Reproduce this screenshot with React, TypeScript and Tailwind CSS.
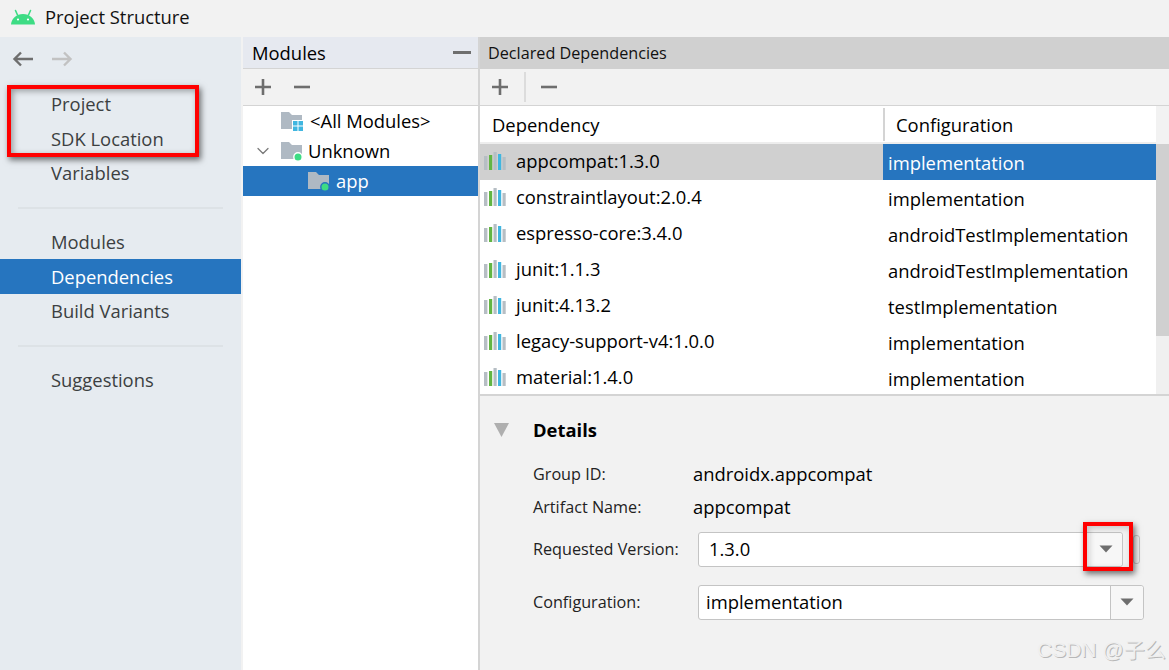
import React from 'react';
import { ChevronDown } from 'lucide-react';

const FONT = "font-['Open_Sans','Noto_Sans_CJK_SC',sans-serif]";

const AndroidLogo = () => (
  <svg width="24" height="16" viewBox="0 0 24 16" className="shrink-0">
    <path d="M0 15.5C0.5 9.5 5.5 5 12 5S23.5 9.5 24 15.5Z" fill="#3ddc84" />
    <path d="M6.5 6 4.5 1.5M17.5 6l2-4.5" stroke="#3ddc84" strokeWidth="1.6" strokeLinecap="round" />
    <circle cx="7" cy="10.5" r="1.1" fill="#fff" />
    <circle cx="17" cy="10.5" r="1.1" fill="#fff" />
  </svg>
);

const NavArrow = ({ right, color }: { right?: boolean; color: string }) => (
  <svg width="21" height="16" viewBox="0 0 21 16" className={right ? 'rotate-180' : ''}>
    <path d="M21 8H2.5M9 1.5 2.5 8 9 14.5" fill="none" stroke={color} strokeWidth="2.4" />
  </svg>
);

const PlusIcon = () => (
  <svg width="16" height="16" viewBox="0 0 16 16" className="shrink-0">
    <path d="M0 8h16M8 0v16" stroke="#6e6e6e" strokeWidth="2.6" />
  </svg>
);

const MinusIcon = () => (
  <svg width="16" height="16" viewBox="0 0 16 16" className="shrink-0">
    <path d="M0 8h16" stroke="#6e6e6e" strokeWidth="2.6" />
  </svg>
);

const LibIcon = () => (
  <svg width="22" height="18" viewBox="0 0 22 18" className="shrink-0 mb-[3px]">
    <rect x="0" y="4" width="3.4" height="14" fill="#b6bec4" />
    <rect x="5" y="3" width="3.2" height="15" fill="#62b543" />
    <rect x="9.5" y="0" width="3.2" height="18" fill="#b6bec4" />
    <rect x="14" y="2" width="3.2" height="16" fill="#40b6e0" />
    <rect x="18.5" y="5" width="3.2" height="13" fill="#b6bec4" />
  </svg>
);

const ModuleFolder = ({ grid, halo = '#fff' }: { grid?: boolean; halo?: string }) => (
  <svg width="24" height="22" viewBox="0 0 24 22" className="shrink-0">
    <path d="M1 2h8l3 3h10v14H1Z" fill="#afb9c3" />
    {grid ? (
      <g>
        <rect x="12" y="10" width="11" height="12" fill="#fff" />
        <rect x="13" y="11" width="4.5" height="4.5" fill="#40b6e0" />
        <rect x="18.5" y="11" width="4.5" height="4.5" fill="#40b6e0" />
        <rect x="13" y="16.5" width="4.5" height="4.5" fill="#40b6e0" />
        <rect x="18.5" y="16.5" width="4.5" height="4.5" fill="#40b6e0" />
      </g>
    ) : (
      <circle cx="18" cy="17" r="4.2" fill="#3ddc84" stroke={halo} strokeWidth="1.4" />
    )}
  </svg>
);

const Caret = () => (
  <svg width="14" height="8" viewBox="0 0 14 8">
    <path d="M0.5 0.5h13L7 7.5Z" fill="#6e6e6e" />
  </svg>
);

const deps = [
  ['appcompat:1.3.0', 'implementation'],
  ['constraintlayout:2.0.4', 'implementation'],
  ['espresso-core:3.4.0', 'androidTestImplementation'],
  ['junit:1.1.3', 'androidTestImplementation'],
  ['junit:4.13.2', 'testImplementation'],
  ['legacy-support-v4:1.0.0', 'implementation'],
  ['material:1.4.0', 'implementation'],
];

const NavItem = ({ label, active }: { label: string; active?: boolean }) => (
  <div className={`h-[34.5px] pl-[51px] flex items-center ${active ? 'bg-[#2675bf] text-white pt-[1px]' : 'text-[#3c3f41]'}`}>{label}</div>
);

export default function App() {
  return (
    <div className={`relative w-[1169px] h-[670px] overflow-hidden bg-[#f2f2f2] text-[18.4px] leading-6 text-black ${FONT}`}>
      {/* title bar */}
      <div className="h-[37px] flex items-center pl-[11px] pb-[3px] gap-[10px] bg-[#f2f2f2]">
        <AndroidLogo />
        <span className="text-[#111]">Project Structure</span>
      </div>

      <div className="flex h-[633px]">
        {/* left nav */}
        <div className="w-[241px] shrink-0 bg-[#e6ebf0]">
          <div className="h-[50px] flex items-center pl-[12px] pb-[6px] gap-[19px]">
            <NavArrow color="#6e6e6e" />
            <NavArrow right color="#c2c2c2" />
          </div>
          <NavItem label="Project" />
          <NavItem label="SDK Location" />
          <NavItem label="Variables" />
          <div className="mx-[18px] my-[16px] h-[2px] bg-[#dde2e6]" />
          <NavItem label="Modules" />
          <NavItem label="Dependencies" active />
          <NavItem label="Build Variants" />
          <div className="mx-[18px] my-[16.5px] h-[2px] bg-[#dde2e6]" />
          <NavItem label="Suggestions" />
        </div>

        {/* modules column */}
        <div className="w-[235px] shrink-0 ml-[2px] bg-white">
          <div className="h-[32px] flex items-center justify-between pl-[9px] pr-[7px] bg-[#e6e9f0] border-b border-[#d4d4d4]">
            <span>Modules</span>
            <div className="w-[18px] h-[3px] bg-[#6e6e6e]" />
          </div>
          <div className="h-[37px] flex items-center pl-[12px] gap-[23px] bg-[#f2f2f2] border-b border-[#d4d4d4]">
            <PlusIcon />
            <MinusIcon />
          </div>
          <div className="h-[30px] flex items-center pl-[37px] gap-[6px]">
            <ModuleFolder grid />
            <span>&lt;All Modules&gt;</span>
          </div>
          <div className="h-[30px] flex items-center pl-[10px]">
            <ChevronDown size={20} strokeWidth={1.5} className="text-[#7a7a7a] mr-[7px]" />
            <ModuleFolder />
            <span className="ml-[4px]">Unknown</span>
          </div>
          <div className="h-[30px] flex items-center pl-[64px] gap-[5px] bg-[#2675bf] text-white">
            <ModuleFolder halo="#2675bf" />
            <span>app</span>
          </div>
        </div>

        {/* dependencies */}
        <div className="flex-1 flex flex-col border-l-2 border-[#d4d4d4] min-w-0">
          <div className="h-[32px] pl-[8px] flex items-center bg-[#d0d0d0] text-[16.2px] text-[#111]">Declared Dependencies</div>
          <div className="h-[37px] flex items-center pl-[12px] bg-[#f2f2f2] border-b border-[#d4d4d4]">
            <PlusIcon />
            <div className="w-[2px] h-[30px] bg-[#dcdcdc] ml-[16px] mr-[15px]" />
            <MinusIcon />
          </div>
          <div className="flex h-[290px] border-b-2 border-[#d4d4d4]">
            <div className="flex-1 bg-white min-w-0">
              <div className="h-[36px] flex items-center bg-white border-b-2 border-[#ededed] box-content">
                <div className="w-[403px] pl-[12px] pt-[2px]">Dependency</div>
                <div className="flex-1 h-[33px] border-l-2 border-[#d4d4d4] pl-[11px] pt-[2px] flex items-center">Configuration</div>
              </div>
              {deps.map(([name, config], i) => (
                <div key={name} className="h-[36px] flex">
                  <div className={`w-[403px] pl-[4px] flex items-center gap-[10px] ${i === 0 ? 'bg-[#d0d0d0]' : ''}`}>
                    <LibIcon />
                    <span className="mb-[2px]">{name}</span>
                  </div>
                  <div className={`flex-1 pl-[5px] pt-[2px] flex items-center ${i === 0 ? 'bg-[#2675bf] text-white' : ''}`}>{config}</div>
                </div>
              ))}
            </div>
            <div className="w-[13px] shrink-0 flex flex-col">
              <div className="h-[38px] bg-[#f2f2f2]" />
              <div className="h-[192px] bg-[#d0d0d0]" />
              <div className="flex-1 bg-[#f0f0f0]" />
            </div>
          </div>

          {/* details */}
          <div className="flex-1 pl-[14px] pt-[21px]">
            <div className="flex items-center h-[26px]">
              <svg width="15" height="14" viewBox="0 0 15 14" className="shrink-0">
                <path d="M0 0h15L7.5 14Z" fill="#afafaf" />
              </svg>
              <span className="ml-[24px] font-bold">Details</span>
            </div>
            <div className="mt-[14px] flex flex-col text-[16.2px]">
              <div className="h-[33px] flex items-center pl-[39px]">
                <span className="w-[160px] text-[#222]">Group ID:</span>
                <span className="text-[18.4px]">androidx.appcompat</span>
              </div>
              <div className="h-[33px] flex items-center pl-[39px]">
                <span className="w-[160px] text-[#222]">Artifact Name:</span>
                <span className="text-[18.4px]">appcompat</span>
              </div>
              <div className="mt-[8px] h-[36px] flex items-center pl-[39px]">
                <span className="w-[165px] text-[#222]">Requested Version:</span>
                <div className="w-[425px] h-[35px] flex items-center bg-white border border-[#c4c4c4] rounded-[3px] pl-[10px] text-[18.4px]">
                  <span className="flex-1">1.3.0</span>
                  <div className="w-[32px] h-full flex items-center justify-center bg-[#f7f7f7] rounded-r-[3px]">
                    <Caret />
                  </div>
                </div>
                <div className="w-[7px] h-[29px] ml-[10px] border border-[#c4c4c4] rounded-[3px]" />
              </div>
              <div className="mt-[17px] h-[36px] flex items-center pl-[39px]">
                <span className="w-[165px] text-[#222]">Configuration:</span>
                <div className="w-[446px] h-[35px] flex items-center bg-white border border-[#c4c4c4] rounded-[3px] pl-[7px] text-[18.4px]">
                  <span className="flex-1">implementation</span>
                  <div className="w-[33px] h-full flex items-center justify-center bg-[#f7f7f7] border-l border-[#c4c4c4] rounded-r-[3px]">
                    <Caret />
                  </div>
                </div>
              </div>
            </div>
          </div>
        </div>
      </div>

      {/* annotation boxes */}
      <div className="absolute left-[7px] top-[85px] w-[192px] h-[72px] border-[4px] border-[#ff0000] shadow-[2px_3px_6px_rgba(0,0,0,0.55),inset_2px_2px_6px_rgba(0,0,0,0.35)]" />
      <div className="absolute left-[1083px] top-[522px] w-[50px] h-[49px] border-[4px] border-[#ff0000] shadow-[2px_3px_6px_rgba(0,0,0,0.55),inset_2px_2px_6px_rgba(0,0,0,0.2)]" />

      {/* watermark */}
      <div className="absolute left-[1037px] top-[638px] whitespace-nowrap font-['Liberation_Sans','Noto_Sans_CJK_SC',sans-serif] text-[21px] leading-6 text-[#efefef] [text-shadow:1px_1px_0_#b8b8b8]">CSDN @子么</div>
    </div>
  );
}
